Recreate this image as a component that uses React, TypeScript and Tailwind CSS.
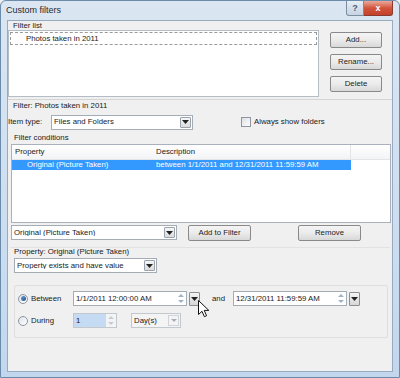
const font = "font-['Liberation_Sans',Arial,sans-serif]";

const Arrow = () => (
  <svg width="7" height="4" viewBox="0 0 7 4">
    <path d="M0 0h7L3.5 4z" fill="#222" />
  </svg>
);

const Spin = ({ dim = false }: { dim?: boolean }) => (
  <div className="flex flex-col items-center justify-center gap-[3px] w-[10px] h-full">
    <svg width="6" height="3" viewBox="0 0 6 3">
      <path d="M0 3L3 0l3 3z" fill={dim ? "#c6ccd4" : "#9fb2c8"} />
    </svg>
    <svg width="6" height="3" viewBox="0 0 6 3">
      <path d="M0 0h6L3 3z" fill={dim ? "#c6ccd4" : "#9fb2c8"} />
    </svg>
  </div>
);

const Combo = ({ text, className }: { text: string; className: string }) => (
  <div className={`flex items-center h-[15px] bg-white border border-[#a4acb6] ${className}`}>
    <span className="flex-1 pl-[2px] truncate leading-none">{text}</span>
    <div className="w-[11px] h-[11px] mr-[1px] flex items-center justify-center border border-[#9aa3ad] rounded-[1px] bg-gradient-to-b from-[#f6f6f6] to-[#dcdcdc]">
      <Arrow />
    </div>
  </div>
);

const Btn = ({ text, className }: { text: string; className: string }) => (
  <button className={`h-[16px] flex items-center justify-center rounded-[2px] border border-[#8a8a8a] bg-gradient-to-b from-[#f4f4f4] via-[#ebebeb] to-[#d8d8d8] text-[#222] leading-none ${className}`}>
    {text}
  </button>
);

const DatePick = ({ text }: { text: string }) => (
  <div className="flex items-center gap-[2px]">
    <div className="flex items-center w-[114px] h-[15px] bg-white border border-[#a4acb6]">
      <span className="flex-1 pl-[2px] leading-none">{text}</span>
      <Spin />
    </div>
    <div className="w-[11px] h-[14px] flex items-center justify-center border border-[#8a8f96] rounded-[1px] bg-gradient-to-b from-[#f4f4f4] to-[#d6d6d6]">
      <Arrow />
    </div>
  </div>
);

const Radio = ({ on }: { on: boolean }) => (
  <div className="w-[10px] h-[10px] rounded-full border border-[#8c97a3] bg-gradient-to-br from-[#dfe3e8] to-white flex items-center justify-center">
    {on && <div className="w-[5px] h-[5px] rounded-full bg-gradient-to-br from-[#6fa0d8] to-[#1e4f8c]" />}
  </div>
);

export default function App() {
  return (
    <div className={`relative w-[400px] h-[378px] overflow-hidden bg-[#f0f0f0] ${font} text-[7.8px] text-[#1a1a1a]`}>
      <div className="w-full h-full flex flex-col rounded-t-[6px] border border-[#6b8bab] bg-gradient-to-b from-[#dbe6f2] via-[#cfdff0] to-[#c2d7ee]">
        {/* title bar */}
        <div className="h-[19px] flex items-start shrink-0">
          <span className="pl-[5px] pt-[5px] text-[9px] text-[#1e2a36] leading-none">Custom filters</span>
          <div className="ml-auto mr-[6px] flex">
            <div className="w-[18px] h-[15px] flex items-center justify-center rounded-bl-[3px] border border-[#7c8da0] border-t-0 bg-gradient-to-b from-[#e6edf5] to-[#c7d4e3] text-[#4a5d72] text-[9px] font-bold leading-none">
              ?
            </div>
            <div className="w-[29px] h-[15px] flex items-center justify-center rounded-br-[3px] border border-[#8a3a30] border-t-0 border-l-0 bg-gradient-to-b from-[#e9a99b] via-[#d2543c] to-[#c3432b] text-white text-[9px] font-bold leading-none">
              x
            </div>
          </div>
        </div>

        {/* client area */}
        <div className="mx-[6px] h-[352px] bg-[#f0f0f0] border border-[#98aabf] flex flex-col shrink-0">
          {/* Filter list */}
          <div className="h-[79px] border-b border-[#d5d5d5] flex flex-col">
            <div className="h-[9px] pl-[5px] leading-[10px]">Filter list</div>
            <div className="flex flex-1">
              <div className="w-[311px] h-[67px] bg-white border border-[#b4bcc5] p-[1px]">
                <div className="h-[13px] border border-dashed border-[#9a9a9a] pl-[15px] flex items-center leading-none">
                  Photos taken in 2011
                </div>
              </div>
              <div className="ml-[11px] pt-[2px] flex flex-col gap-[6px]">
                <Btn text="Add..." className="w-[52px]" />
                <Btn text="Rename..." className="w-[52px]" />
                <Btn text="Delete" className="w-[52px]" />
              </div>
            </div>
          </div>

          {/* Filter */}
          <div className="pl-[5px] pt-[1px] h-[12px] leading-[10px]">Filter: Photos taken in 2011</div>
          <div className="flex items-center h-[16px] mt-[2px]">
            <span className="w-[43px] leading-none">Item type:</span>
            <Combo text="Files and Folders" className="w-[142px]" />
            <div className="ml-[48px] flex items-center gap-[3px]">
              <div className="w-[10px] h-[10px] border border-[#8e97a1] bg-gradient-to-br from-[#dcdfe3] to-white" />
              <span className="leading-none">Always show folders</span>
            </div>
          </div>
          <div className="pl-[6px] mt-[3px] h-[11px] leading-[10px]">Filter conditions</div>

          <div className="ml-[3px] w-[380px] h-[79px] bg-white border border-[#a9b2bc] flex flex-col">
            <div className="h-[15px] flex border-b border-[#e3e5e8] bg-gradient-to-b from-white to-[#f3f4f6]">
              <div className="w-[140px] pl-[3px] flex items-center leading-none">Property</div>
              <div className="w-[199px] pl-[4px] flex items-center border-r border-[#e3e5e8] leading-none">Description</div>
            </div>
            <div className="h-[10px] w-[339px] bg-[#3399ff] text-white flex items-center leading-none">
              <span className="w-[140px] pl-[15px]">Original (Picture Taken)</span>
              <span className="pl-[4px]">between 1/1/2011 and 12/31/2011 11:59:59 AM</span>
            </div>
          </div>

          <div className="flex items-center h-[17px] mt-[1px]">
            <Combo text="Original (Picture Taken)" className="ml-[3px] w-[166px]" />
            <Btn text="Add to Filter" className="ml-[11px] w-[63px]" />
            <Btn text="Remove" className="ml-[47px] w-[63px]" />
          </div>

          <div className="mt-[6px] mx-[2px] border-t border-[#e2e2e2]" />
          <div className="pl-[6px] h-[8px] leading-[8px]">Property: Original (Picture Taken)</div>
          <Combo text="Property exists and have value" className="ml-[6px] mt-[2px] w-[143px]" />

          {/* date group */}
          <div className="ml-[6px] mt-[12px] w-[374px] h-[53px] border border-[#dedede] rounded-[2px] flex flex-col pt-[5px] gap-[7px]">
            <div className="flex items-center">
              <div className="ml-[3px] w-[10px]"><Radio on /></div>
              <span className="ml-[3px] w-[42px] leading-none">Between</span>
              <DatePick text="1/1/2011 12:00:00 AM" />
              <span className="ml-[12px] w-[21px] leading-none">and</span>
              <DatePick text="12/31/2011 11:59:59 AM" />
            </div>
            <div className="flex items-center">
              <div className="ml-[3px] w-[10px]"><Radio on={false} /></div>
              <span className="ml-[3px] w-[42px] leading-none">During</span>
              <div className="flex items-center w-[44px] h-[15px] border border-[#c3c8ce] bg-[#f4f4f4]">
                <span className="flex-1 h-full bg-[#c5daf3] pl-[2px] flex items-center leading-none">1</span>
                <Spin dim />
              </div>
              <div className="ml-[14px] flex items-center w-[50px] h-[15px] border border-[#c3c8ce] bg-[#f4f4f4]">
                <span className="flex-1 pl-[2px] leading-none">Day(s)</span>
                <div className="w-[11px] h-[11px] mr-[1px] flex items-center justify-center border border-[#d0d4d8]">
                  <svg width="6" height="3" viewBox="0 0 6 3"><path d="M0 0h6L3 3z" fill="#a8adb3" /></svg>
                </div>
              </div>
            </div>
          </div>
        </div>
      </div>

      {/* mouse pointer */}
      <svg className="absolute left-[198px] top-[300px]" width="12" height="18" viewBox="0 0 12 18">
        <path d="M0.5 0.5v14l3.5-3.2 2.4 5.4 2.2-1-2.4-5.3h4.6z" fill="#fff" stroke="#111" strokeWidth="1" strokeLinejoin="round" />
      </svg>
    </div>
  );
}
